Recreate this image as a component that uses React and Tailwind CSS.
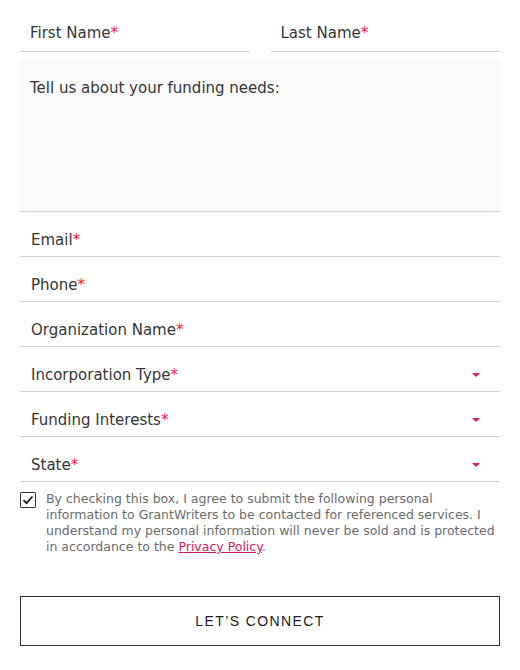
import React, { useState } from 'react';

const Req = ({ color = 'text-[#f0155a]' }) => <span className={color}>*</span>;

const Field = ({ label, select, color }) => (
    <div className="flex items-center justify-between h-[45px] border-b border-[#d4d4d4] pl-[11px] pr-[20px] pt-[12px]">
        <span className="text-[15px] text-[#363636]">
            {label}
            <Req color={color} />
        </span>
        {select && (
            <span className="w-0 h-0 border-l-[4px] border-r-[4px] border-t-[4px] border-l-transparent border-r-transparent border-t-[#e8175d]" />
        )}
    </div>
);

export default function App() {
    const [checked, setChecked] = useState(true);

    return (
        <div className="w-[520px] h-[670px] bg-white px-5 pt-[9px] font-['DejaVu_Sans',Verdana,sans-serif]">
            {/* name row */}
            <div className="flex gap-[21px]">
                <div className="flex-1 h-[43px] border-b border-[#d4d4d4] pl-[10px] pt-[13px] text-[15px] text-[#363636]">
                    First Name<Req />
                </div>
                <div className="flex-1 h-[43px] border-b border-[#d4d4d4] pl-[10px] pt-[13px] text-[15px] text-[#363636]">
                    Last Name<Req />
                </div>
            </div>

            {/* textarea */}
            <div className="mt-[8px] h-[152px] bg-[#fafafa] border-b border-[#d4d4d4] shadow-[0_0_8px_rgba(0,0,0,0.04)] px-[10px] pt-[17px] text-[15px] text-[#363636]">
                Tell us about your funding needs:
            </div>

            <Field label="Email" color="text-[#f51a2a]" />
            <Field label="Phone" color="text-[#f51a2a]" />
            <Field label="Organization Name" color="text-[#f51a2a]" />
            <Field label="Incorporation Type" select color="text-[#f0155a]" />
            <Field label="Funding Interests" select color="text-[#f0155a]" />
            <Field label="State" select color="text-[#f0155a]" />

            {/* consent */}
            <div className="flex gap-[10px] mt-[9px]">
                <button
                    onClick={() => setChecked(!checked)}
                    className="shrink-0 w-[16px] h-[16px] border border-[#333] rounded-[1px] flex items-center justify-center mt-[1px]"
                >
                    {checked && (
                        <svg width="12" height="10" viewBox="0 0 12 10" fill="none">
                            <path d="M1.5 5.2 L4.5 8.2 L10.5 1.5" stroke="#222" strokeWidth="1.8" />
                        </svg>
                    )}
                </button>
                <p className="text-[12.5px] leading-[16px] text-[#6b6b6b]">
                    By checking this box, I agree to submit the following personal information to GrantWriters to be contacted for referenced services. I understand my personal information will never be sold and is protected in accordance to the{' '}
                    <a href="#" className="text-[#d6195e] underline">Privacy Policy</a>.
                </p>
            </div>

            {/* submit */}
            <button className="mt-[41px] w-full h-[50px] border border-[#333] bg-white text-[14px] tracking-[1.4px] text-[#222] font-['Liberation_Sans',Arial,sans-serif]">
                LET’S CONNECT
            </button>
        </div>
    );
}
